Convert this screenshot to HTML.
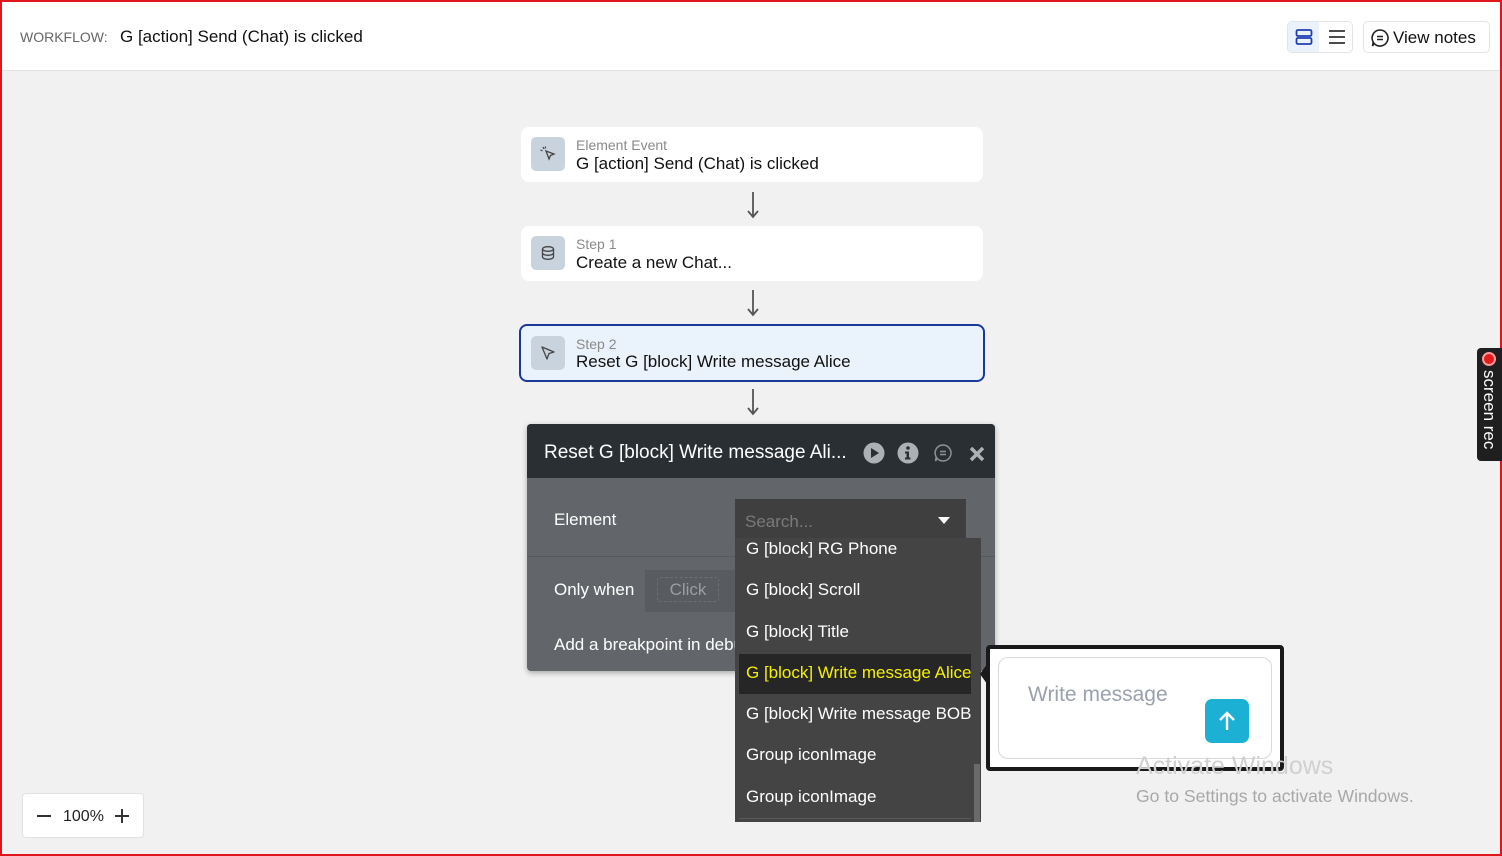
<!DOCTYPE html>
<html><head><meta charset="utf-8"><style>
*{box-sizing:border-box;margin:0;padding:0}
body{width:1502px;height:856px;overflow:hidden;background:#f1f1f1;font-family:"Liberation Sans",sans-serif;position:relative;border:2px solid #e0161d}
.abs{position:absolute}
.hdr{left:0;top:0;width:1498px;height:69px;background:#fff;border-bottom:1px solid #e2e2e2}
.card{left:519px;width:462px;height:55px;background:#fff;border-radius:8px}
.ic{left:10px;top:10px;width:34px;height:34px;background:#c9d3de;border-radius:5px;display:flex;align-items:center;justify-content:center}
.lab{left:55px;top:10px;font-size:14px;color:#8a8a8a}
.ttl{left:55px;top:27px;font-size:17px;color:#111}
.arrow{left:744px;width:14px;height:28px}
.item{position:absolute;left:11px;font-size:17px;color:#fff}
</style></head><body>
<div class="abs hdr">
 <div class="abs" style="left:18px;top:27px;font-size:14px;color:#666">WORKFLOW:</div>
 <div class="abs" style="left:118px;top:25px;font-size:17px;color:#111">G [action] Send (Chat) is clicked</div>
 <div class="abs" style="left:1285px;top:19px;width:66px;height:32px;border:1px solid #e4e4e4;border-radius:5px;overflow:hidden">
  <div class="abs" style="left:0;top:0;width:31px;height:32px;background:#eaf2fc"></div>
  <svg class="abs" style="left:7px;top:7px" width="18" height="16" viewBox="0 0 18 16"><rect x="1.5" y="1" width="15" height="6" rx="1.5" fill="none" stroke="#1f3fb0" stroke-width="1.8"/><rect x="1.5" y="9" width="15" height="6" rx="1.5" fill="none" stroke="#1f3fb0" stroke-width="1.8"/></svg>
  <svg class="abs" style="left:40px;top:7px" width="18" height="16" viewBox="0 0 18 16"><path d="M1 2h16M1 8h16M1 14h16" stroke="#333" stroke-width="1.8"/></svg>
 </div>
 <div class="abs" style="left:1361px;top:19px;width:127px;height:32px;border:1px solid #e4e4e4;border-radius:5px">
  <svg class="abs" style="left:6px;top:6px" width="20" height="20" viewBox="0 0 20 20"><path d="M10 2a8 8 0 1 1-6 13.3L2.5 18l.7-4A8 8 0 0 1 10 2z" fill="none" stroke="#222" stroke-width="1.6"/><path d="M7 8.5h6M7 11.5h6" stroke="#222" stroke-width="1.5"/></svg>
  <div class="abs" style="left:29px;top:6px;font-size:17px;color:#111">View notes</div>
 </div>
</div>

<div class="abs card" style="top:125px"><div class="abs ic"><svg width="18" height="18" viewBox="0 0 18 18"><path d="M7 6l8 3-3.5 1.5L10 14z" fill="none" stroke="#444" stroke-width="1.3"/><path d="M4 2l1 2M1.5 5l2 .8M6.5 1.5l-.2 2" stroke="#444" stroke-width="1.2"/></svg></div><div class="abs lab">Element Event</div><div class="abs ttl">G [action] Send (Chat) is clicked</div></div>
<svg class="abs arrow" style="top:189px" viewBox="0 0 14 28"><path d="M7 1v24M2 20l5 6 5-6" fill="none" stroke="#555" stroke-width="1.8"/></svg>
<div class="abs card" style="top:224px"><div class="abs ic"><svg width="16" height="16" viewBox="0 0 16 16"><ellipse cx="8" cy="4" rx="5.5" ry="2.3" fill="none" stroke="#444" stroke-width="1.3"/><path d="M2.5 4v8c0 1.3 2.5 2.3 5.5 2.3s5.5-1 5.5-2.3V4M2.5 8c0 1.3 2.5 2.3 5.5 2.3s5.5-1 5.5-2.3" fill="none" stroke="#444" stroke-width="1.3"/></svg></div><div class="abs lab">Step 1</div><div class="abs ttl">Create a new Chat...</div></div>
<svg class="abs arrow" style="top:287px" viewBox="0 0 14 28"><path d="M7 1v24M2 20l5 6 5-6" fill="none" stroke="#555" stroke-width="1.8"/></svg>
<div class="abs card" style="top:322px;height:58px;width:466px;left:517px;background:#eaf2fc;border:2px solid #1a3a9a"><div class="abs ic" style="left:10px;top:10px"><svg width="16" height="16" viewBox="0 0 16 16"><path d="M2 2l12 5-5 1.5L7 14z" fill="none" stroke="#444" stroke-width="1.3" stroke-linejoin="round"/></svg></div><div class="abs lab" style="top:10px">Step 2</div><div class="abs ttl" style="top:26px">Reset G [block] Write message Alice</div></div>
<svg class="abs arrow" style="top:386px" viewBox="0 0 14 28"><path d="M7 1v24M2 20l5 6 5-6" fill="none" stroke="#555" stroke-width="1.8"/></svg>

<div class="abs" style="left:525px;top:422px;width:468px;height:247px;background:#62666a;border-radius:4px;overflow:hidden;box-shadow:0 2px 6px rgba(0,0,0,.3)">
 <div class="abs" style="left:0;top:0;width:468px;height:54px;background:#2a2f33"></div>
 <div class="abs" style="left:17px;top:18px;font-size:19px;color:#fff">Reset G [block] Write message Ali...</div>
 <svg class="abs" style="left:336px;top:18px" width="22" height="22" viewBox="0 0 22 22"><circle cx="11" cy="11" r="10.5" fill="#aeb1b4"/><path d="M8 6l8 5-8 5z" fill="#2a2f33"/></svg>
 <svg class="abs" style="left:370px;top:18px" width="22" height="22" viewBox="0 0 22 22"><circle cx="11" cy="11" r="10.5" fill="#aeb1b4"/><circle cx="11" cy="6" r="1.8" fill="#2a2f33"/><path d="M8 9.5h4v6h1.5v2h-5.5v-2h1.5v-4H8z" fill="#2a2f33"/></svg>
 <svg class="abs" style="left:406px;top:19px" width="20" height="20" viewBox="0 0 20 20"><path d="M10 2a8 8 0 1 1-6 13.3L2.5 18l.7-4A8 8 0 0 1 10 2z" fill="none" stroke="#8d9194" stroke-width="1.5"/><path d="M7 8.5h6M7 11.5h6" stroke="#8d9194" stroke-width="1.4"/></svg>
 <svg class="abs" style="left:441px;top:21px" width="18" height="18" viewBox="0 0 18 18"><path d="M3 3l12 12M15 3L3 15" stroke="#aeb1b4" stroke-width="3.5"/></svg>
 <div class="abs" style="left:27px;top:86px;font-size:17px;color:#fff">Element</div>
 <div class="abs" style="left:0;top:132px;width:468px;height:1px;background:#555a5e"></div>
 <div class="abs" style="left:27px;top:156px;font-size:17px;color:#fff">Only when</div>
 <div class="abs" style="left:118px;top:146px;width:100px;height:42px;background:#585c60"></div>
 <div class="abs" style="left:130px;top:153px;width:62px;height:25px;border:1px dashed #6c7074;border-radius:3px;color:#9a9ea2;font-size:17px;text-align:center;line-height:23px">Click</div>
 <div class="abs" style="left:27px;top:211px;font-size:17px;color:#fff;white-space:nowrap">Add a breakpoint in debug</div>
</div>

<div class="abs" style="left:733px;top:497px;width:231px;height:42px;background:#3f3f3f">
 <div class="abs" style="left:10px;top:13px;font-size:17px;color:#7a7a7a">Search...</div>
 <svg class="abs" style="left:203px;top:18px" width="12" height="8" viewBox="0 0 12 8"><path d="M0 0h12L6 7z" fill="#fff"/></svg>
</div>
<div class="abs" style="left:733px;top:536px;width:246px;height:284px;background:#444">
 <div class="item" style="top:1px">G [block] RG Phone</div>
 <div class="item" style="top:42px">G [block] Scroll</div>
 <div class="item" style="top:84px">G [block] Title</div>
 <div class="abs" style="left:4px;top:116px;width:232px;height:40px;background:#262626"></div>
 <div class="item" style="top:125px;color:#f5f000">G [block] Write message Alice</div>
 <div class="item" style="top:166px">G [block] Write message BOB</div>
 <div class="item" style="top:207px">Group iconImage</div>
 <div class="item" style="top:249px">Group iconImage</div>
 <div class="abs" style="left:239px;top:226px;width:6px;height:58px;background:#6a6a6a"></div>
 <div class="abs" style="left:4px;top:280px;width:232px;height:1px;background:#5a5a5a"></div>
</div>
<svg class="abs" style="left:970px;top:658px" width="18" height="28" viewBox="0 0 18 28"><path d="M18 0L8 14l10 14z" fill="#1a1a1a"/></svg>
<div class="abs" style="left:984px;top:643px;width:298px;height:126px;background:#fff;border:4px solid #1a1a1a;border-radius:4px">
 <div class="abs" style="left:8px;top:8px;width:274px;height:102px;border:1px solid #d8d8de;border-radius:10px"></div>
 <div class="abs" style="left:38px;top:34px;font-size:21px;color:#9aa0ac">Write message</div>
 <div class="abs" style="left:215px;top:50px;width:44px;height:44px;background:#1cb0d4;border-radius:7px"><svg class="abs" style="left:12px;top:11px" width="20" height="22" viewBox="0 0 20 22"><path d="M10 20V3M3 10l7-7 7 7" fill="none" stroke="#fff" stroke-width="2.4"/></svg></div>
</div>
<div class="abs" style="left:1134px;top:750px;font-size:25px;color:#d0d0d0">Activate Windows</div>
<div class="abs" style="left:1134px;top:784px;font-size:17.6px;color:#a8a8a8">Go to Settings to activate Windows.</div>

<div class="abs" style="left:1475px;top:346px;width:25px;height:113px;background:#1f1f1f;border-radius:4px 0 0 4px">
 <div class="abs" style="left:5px;top:4px;width:14px;height:14px;border-radius:50%;background:#e51c1c;border:2px solid #ff9a9a"></div>
 <div class="abs" style="left:3px;top:22px;writing-mode:vertical-rl;font-size:17px;color:#fff;line-height:18px">screen rec</div>
</div>

<div class="abs" style="left:20px;top:791px;width:122px;height:45px;background:#fff;border:1px solid #e2e2e2;border-radius:4px">
 <svg class="abs" style="left:14px;top:21px" width="14" height="2"><rect width="14" height="2" fill="#333"/></svg>
 <div class="abs" style="left:40px;top:14px;font-size:16px;color:#222">100%</div>
 <svg class="abs" style="left:92px;top:15px" width="14" height="14"><path d="M7 0v14M0 7h14" stroke="#333" stroke-width="2"/></svg>
</div>
</body></html>
